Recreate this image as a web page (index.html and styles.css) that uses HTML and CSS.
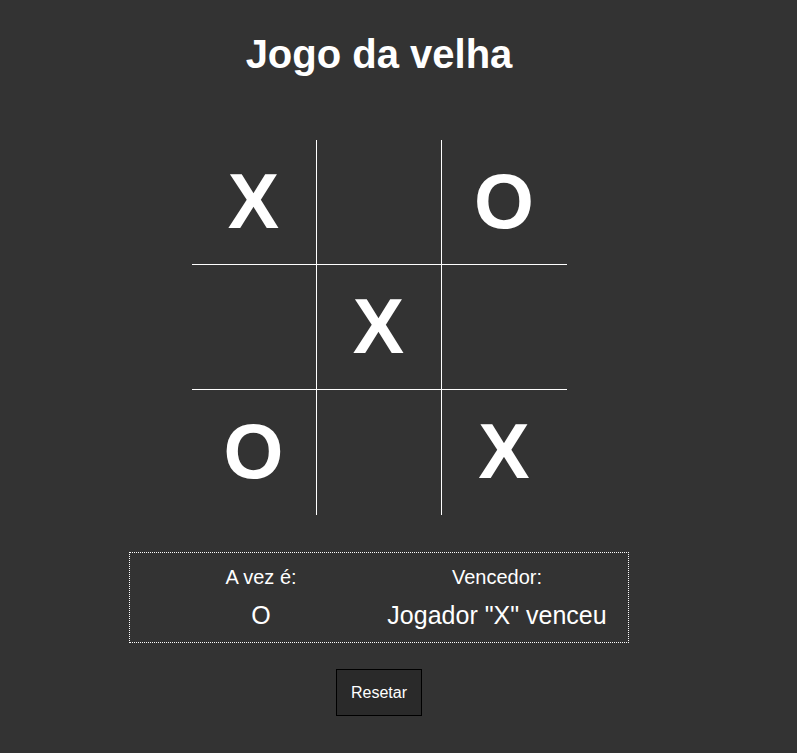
FILE: index.html
```html
<!DOCTYPE html>
<html lang="pt">
<head>
<meta charset="utf-8">
<title>Jogo da velha</title>
<link rel="stylesheet" href="styles.css">
</head>
<body>
<main class="page">
  <h1 class="title">Jogo da velha</h1>
  <div class="board">
    <div class="cell">X</div>
    <div class="cell"></div>
    <div class="cell">O</div>
    <div class="cell"></div>
    <div class="cell">X</div>
    <div class="cell"></div>
    <div class="cell">O</div>
    <div class="cell"></div>
    <div class="cell">X</div>
  </div>
  <div class="info">
    <div class="col col-turn">
      <div class="label">A vez é:</div>
      <div class="value">O</div>
    </div>
    <div class="col col-winner">
      <div class="label">Vencedor:</div>
      <div class="value">Jogador "X" venceu</div>
    </div>
  </div>
  <button class="reset" type="button">Resetar</button>
</main>
</body>
</html>
```

FILE: styles.css
```css
html, body {
  margin: 0;
  padding: 0;
  background: #333333;
  color: #ffffff;
  font-family: "Liberation Sans", Arial, sans-serif;
}

.page {
  width: 758px;
  display: flex;
  flex-direction: column;
  align-items: center;
}

.title {
  margin: 31px 0 0;
  font-size: 40px;
  line-height: 46px;
  font-weight: bold;
}

.board {
  margin-top: 63px;
  display: grid;
  grid-template-columns: repeat(3, 125px);
  grid-template-rows: repeat(3, 125px);
}

.cell {
  box-sizing: border-box;
  display: flex;
  align-items: center;
  justify-content: center;
  font-size: 77px;
  font-weight: bold;
  line-height: 1;
  padding-bottom: 2px;
}

.cell:nth-child(-n+6) {
  border-bottom: 1px solid #ffffff;
}

.cell:nth-child(3n+1),
.cell:nth-child(3n+2) {
  border-right: 1px solid #ffffff;
}

.info {
  box-sizing: border-box;
  margin-top: 37px;
  width: 500px;
  border: 1px dotted #ffffff;
  padding: 13px 11px 12px 15px;
  display: flex;
}

.col {
  text-align: center;
  white-space: nowrap;
}

.col-turn {
  width: 232px;
}

.col-winner {
  width: 240px;
}

.label {
  font-size: 20px;
  line-height: 23px;
}

.value {
  margin-top: 12px;
  font-size: 25px;
  line-height: 29px;
}

.reset {
  margin-top: 26px;
  background: #2a2a2a;
  color: #ffffff;
  border: 1px solid #000000;
  border-radius: 0;
  padding: 13px 14px;
  font-family: "Liberation Sans", Arial, sans-serif;
  font-size: 16px;
  line-height: 19px;
}
```
